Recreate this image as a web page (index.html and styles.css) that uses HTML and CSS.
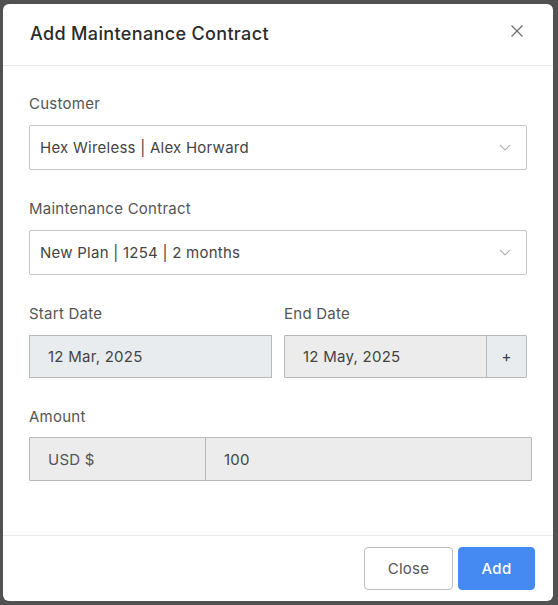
FILE: index.html
```html
<!DOCTYPE html>
<html lang="en">
<head>
<meta charset="utf-8">
<title>Add Maintenance Contract</title>
<link rel="stylesheet" href="styles.css">
</head>
<body>
<div class="modal">
  <div class="modal-header">
    <h2 class="modal-title">Add Maintenance Contract</h2>
    <button class="close-x" aria-label="Close">
      <svg width="14" height="14" viewBox="0 0 14 14"><path d="M1.5 1.5 L12.5 12.5 M12.5 1.5 L1.5 12.5" stroke="#6f6f6f" stroke-width="1.3" fill="none"/></svg>
    </button>
  </div>
  <div class="modal-body">
    <div class="field">
      <label class="label">Customer</label>
      <div class="select">
        <span>Hex Wireless | Alex Horward</span>
        <svg class="chev" width="12" height="7" viewBox="0 0 12 7"><polyline points="1,1 6,6 11,1" stroke="#b4b4b4" stroke-width="1.1" fill="none"/></svg>
      </div>
    </div>
    <div class="field">
      <label class="label">Maintenance Contract</label>
      <div class="select">
        <span>New Plan | 1254 | 2 months</span>
        <svg class="chev" width="12" height="7" viewBox="0 0 12 7"><polyline points="1,1 6,6 11,1" stroke="#b4b4b4" stroke-width="1.1" fill="none"/></svg>
      </div>
    </div>
    <div class="field row">
      <div class="col">
        <label class="label">Start Date</label>
        <div class="input readonly-blue">12 Mar, 2025</div>
      </div>
      <div class="col">
        <label class="label">End Date</label>
        <div class="group">
          <div class="input readonly-gray grow">12 May, 2025</div>
          <div class="addon plus">+</div>
        </div>
      </div>
    </div>
    <div class="field">
      <label class="label">Amount</label>
      <div class="group amount">
        <div class="addon currency">USD $</div>
        <div class="input readonly-gray grow">100</div>
      </div>
    </div>
  </div>
  <div class="modal-footer">
    <button class="btn btn-close">Close</button>
    <button class="btn btn-add">Add</button>
  </div>
</div>
</body>
</html>
```

FILE: styles.css
```css
* { box-sizing: border-box; }
html, body { margin: 0; padding: 0; }
body {
  background: #515151;
  width: 558px;
  height: 605px;
  overflow: hidden;
  font-family: "Inter", "Open Sans", sans-serif;
  color: #4a4a4a;
  letter-spacing: 0.25px;
}
.modal {
  margin: 4px 0 0 3px;
  width: 550px;
  height: 597px;
  background: #fff;
  border-radius: 6px;
  display: flex;
  flex-direction: column;
}
.modal-header {
  height: 62px;
  border-bottom: 1px solid #e8e8e8;
  display: flex;
  align-items: center;
  justify-content: space-between;
  padding: 0 29px 3px 27px;
}
.modal-title {
  margin: 0;
  font-size: 18px;
  font-weight: 500;
  color: #2b2b2b;
  letter-spacing: 0.35px;
}
.close-x {
  border: 0;
  background: none;
  padding: 0;
  width: 14px;
  height: 14px;
  margin-top: -4px;
  display: flex;
}
.modal-body {
  flex: 1;
  padding: 28px 26px 0 26px;
}
.field { margin-bottom: 29px; }
.field.row {
  display: flex;
  gap: 12px;
}
.col { flex: 1; min-width: 0; }
.label {
  display: block;
  font-size: 15px;
  line-height: 20px;
  color: #555;
  margin-bottom: 11px;
}
.select {
  height: 45px;
  border: 1px solid #c4c4c4;
  border-radius: 2px;
  display: flex;
  align-items: center;
  justify-content: space-between;
  padding: 0 15px 0 10px;
  font-size: 15px;
  color: #444;
}
.group {
  display: flex;
  height: 43px;
  border: 1px solid #b9b9b9;
  border-radius: 1px;
}
.group.amount {
  height: 44px;
  margin-top: -1px;
  margin-right: -5px;
}
.input {
  height: 43px;
  display: flex;
  align-items: center;
  padding: 0 18px;
  font-size: 15px;
  color: #444;
}
.group .input { height: 100%; }
.readonly-blue {
  background: #e9ecef;
  border: 1px solid #b9b9b9;
}
.readonly-gray { background: #ececec; }
.grow { flex: 1; }
.addon {
  display: flex;
  align-items: center;
  font-size: 15px;
  color: #555;
  background: #e9ecef;
}
.plus {
  width: 40px;
  justify-content: center;
  border-left: 1px solid #b9b9b9;
  color: #3a3a4a;
}
.currency {
  width: 176px;
  padding-left: 18px;
  background: #ececec;
  border-right: 1px solid #b9b9b9;
}
.modal-footer {
  height: 66px;
  border-top: 1px solid #ebebeb;
  display: flex;
  justify-content: flex-end;
  align-items: flex-start;
  padding: 11px 18px 0 0;
  gap: 5px;
}
.btn {
  height: 43px;
  border-radius: 4px;
  font-family: inherit;
  font-size: 15px;
  letter-spacing: 0.25px;
  cursor: pointer;
}
.btn-close {
  width: 89px;
  background: #fff;
  border: 1px solid #bdbdbd;
  color: #555;
}
.btn-add {
  width: 77px;
  background: #4589f2;
  border: 1px solid #4589f2;
  color: #fff;
  font-weight: 500;
}
```
